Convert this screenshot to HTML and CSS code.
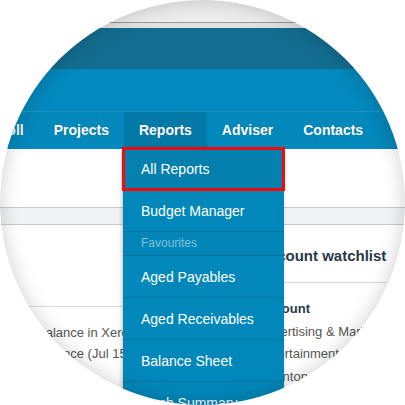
FILE: index.html
```html
<!DOCTYPE html>
<html lang="en">
  <head>
    <meta charset="UTF-8" />
    <meta name="viewport" content="width=device-width, initial-scale=1.0" />
    <title>Reports menu</title>
    <link rel="stylesheet" href="styles.css">
  </head>
  <body>
    <div class="lens">
      <div class="browser-bar"></div>
      <div class="browser-gap"></div>
      <div class="header"></div>
      <div class="org-bar"></div>

      <nav class="nav">
        <ul>
          <li>Payroll</li>
          <li>Projects</li>
          <li class="active">Reports</li>
          <li>Adviser</li>
          <li>Contacts</li>
        </ul>
      </nav>

      <div class="subbar"></div>
      <div class="strip"></div>

      <div class="content">
        <div class="bank">
          <div class="bank-head"></div>
          <p>Balance in Xero</p>
          <p>Balance (Jul 15, 2014)</p>
        </div>
        <div class="watchlist">
          <h2>Account watchlist</h2>
          <p class="col-head">Account</p>
          <p>Advertising &amp; Marketing</p>
          <p>Entertainment</p>
          <p>Inventory</p>
        </div>
      </div>

      <ul class="dropdown">
        <li class="selected">All Reports</li>
        <li>Budget Manager</li>
        <li class="group">Favourites</li>
        <li>Aged Payables</li>
        <li>Aged Receivables</li>
        <li>Balance Sheet</li>
        <li>Cash Summary</li>
      </ul>

      <div class="shade"></div>
    </div>
  </body>
</html>
```

FILE: styles.css
```css
body {
  margin: 0;
  padding: 0;
  background: #fff;
  font-family: "Liberation Sans", Arial, sans-serif;
}

.lens {
  position: relative;
  width: 405px;
  height: 405px;
  border-radius: 50%;
  overflow: hidden;
  background: #fff;
}

.browser-bar {
  height: 22px;
  background: #ededed;
  border-bottom: 1px solid #9a9a9a;
}

.browser-gap {
  height: 5px;
  background: #e2e2e2;
}

.header {
  height: 41px;
  background: #136d90;
}

.org-bar {
  height: 42px;
  background: #0389bd;
}

.nav {
  height: 37px;
  background: #0388bb;
  border-top: 1px solid #1d95c4;
}

.nav ul {
  display: flex;
  margin: 0 0 0 -38px;
  padding: 0;
  list-style: none;
}

.nav li {
  padding: 0 15px;
  line-height: 37px;
  font-size: 14px;
  font-weight: bold;
  color: #fff;
  text-shadow: 0 0 1px rgba(0, 0, 0, 0.25);
  white-space: nowrap;
}

.nav li.active {
  background: #0379a8;
}

.subbar {
  height: 58px;
  background: #fff;
  border-bottom: 1px solid #c9c9c9;
}

.strip {
  height: 16px;
  background: #f0f2f3;
  border-bottom: 1px solid #c6c8ca;
}

.content {
  display: flex;
}

.content p {
  margin: 0;
  font-size: 13px;
  color: #555;
  white-space: nowrap;
}

.bank {
  width: 221px;
  padding-left: 37px;
}

.bank-head {
  height: 81px;
  margin-left: -37px;
  border-bottom: 1px solid #dcdcdc;
  margin-bottom: 15px;
}

.bank p {
  line-height: 21px;
}

.watchlist {
  width: 128px;
}

.watchlist h2 {
  margin: 22px 0 0;
  padding-bottom: 17px;
  border-bottom: 1px solid #d6d6d6;
  font-size: 15px;
  line-height: 18px;
  color: #2b3845;
  white-space: nowrap;
}

.watchlist p {
  line-height: 22.6px;
}

.watchlist .col-head {
  margin-top: 15px;
  font-weight: bold;
  color: #2b3845;
}

.dropdown {
  position: absolute;
  top: 148px;
  left: 123px;
  width: 161px;
  margin: 0;
  padding: 0;
  list-style: none;
  background: #0287ba;
  box-shadow: -1px 2px 4px rgba(0, 0, 0, 0.25);
}

.dropdown li {
  padding: 13px 18px 12px;
  line-height: 16px;
  font-size: 14px;
  color: #fff;
  border-bottom: 1px solid #0a74a0;
  white-space: nowrap;
}

.dropdown li.selected {
  background: #0580ae;
  outline: 3px solid #f20a0a;
  outline-offset: -2px;
}

.dropdown li.group {
  padding: 4px 18px 5px;
  line-height: 14px;
  font-size: 12px;
  color: #80c1db;
  background: #0385b7;
}

.shade {
  position: absolute;
  inset: 0;
  border-radius: 50%;
  box-shadow: inset 0 0 20px rgba(0, 0, 0, 0.2);
  pointer-events: none;
}
```
